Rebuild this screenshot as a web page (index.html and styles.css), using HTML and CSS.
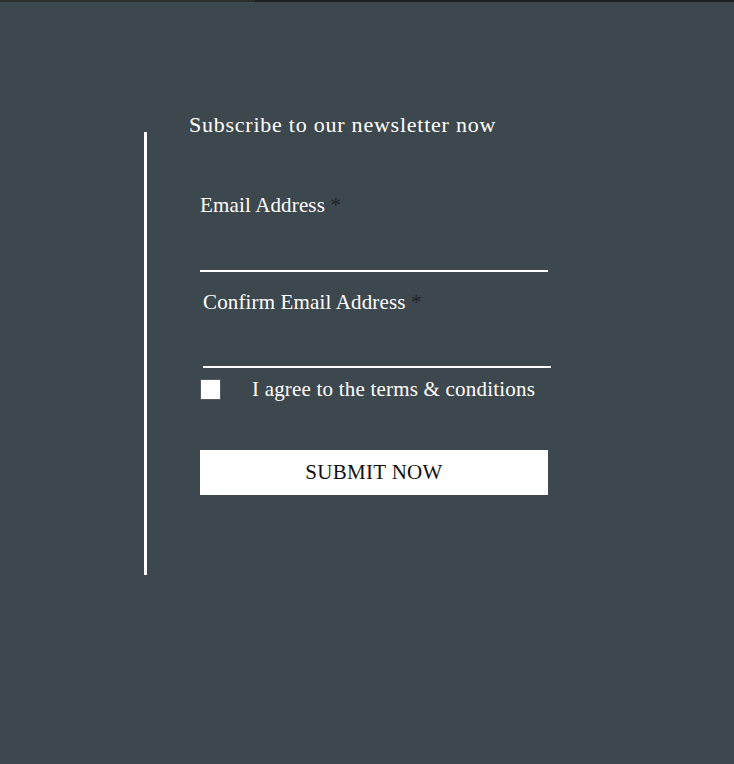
FILE: index.html
```html
<!DOCTYPE html>
<html>
<head>
<meta charset="utf-8">
<link rel="stylesheet" href="styles.css">
</head>
<body>
<div class="topbar"><div class="topbar-left"></div></div>
<div class="page">
  <div class="panel">
    <h2 class="title">Subscribe to our newsletter now</h2>
    <div class="field field-first">
      <label class="label">Email Address <span class="req">*</span></label>
      <div class="line"></div>
    </div>
    <div class="field field-shift">
      <label class="label">Confirm Email Address <span class="req">*</span></label>
      <div class="line line-2"></div>
    </div>
    <div class="agree">
      <span class="box"></span>
      <span class="agree-text">I agree to the terms &amp; conditions</span>
    </div>
    <button class="submit">SUBMIT NOW</button>
  </div>
</div>
</body>
</html>
```
FILE: styles.css
```css
html, body {
  margin: 0;
  padding: 0;
  background: #3d474e;
  height: 100%;
}
body {
  font-family: "Liberation Serif", "Times New Roman", serif;
  color: #fff;
}
.topbar {
  height: 2px;
  background: #1d1f21;
  display: flex;
}
.topbar-left {
  width: 255px;
  background: #2a2e31;
}
.page {
  padding-top: 130px;
  padding-left: 144px;
}
.panel {
  display: flow-root;
  border-left: 3px solid #fff;
  height: 443px;
  padding-left: 42px;
}
.title {
  margin: -19px 0 0 0;
  font-size: 22px;
  font-weight: normal;
  letter-spacing: 0.76px;
  line-height: 24px;
}
.field {
  margin-left: 11px;
  width: 348px;
}
.field-first {
  margin-top: 56px;
}
.label {
  display: block;
  font-size: 21px;
  line-height: 24px;
  letter-spacing: 0.15px;
}
.req {
  color: #222;
}
.line {
  margin-top: 53px;
  height: 2px;
  background: #fff;
}
.line-2 {
  margin-top: 52px;
}
.field-shift {
  margin-left: 14px;
  margin-top: 18px;
}
.agree {
  display: flex;
  align-items: center;
  margin-left: 11px;
  margin-top: 9px;
}
.box {
  width: 19px;
  height: 19px;
  background: #fff;
  border: 1px solid #555b60;
}
.agree-text {
  margin-left: 31px;
  font-size: 21px;
  letter-spacing: 0.2px;
  line-height: 24px;
}
.submit {
  display: block;
  margin: 49px 0 0 11px;
  width: 348px;
  height: 45px;
  border: none;
  background: #fff;
  color: #111;
  font-family: "Liberation Serif", "Times New Roman", serif;
  font-size: 21px;
  letter-spacing: 0.3px;
  padding: 0;
}
```
